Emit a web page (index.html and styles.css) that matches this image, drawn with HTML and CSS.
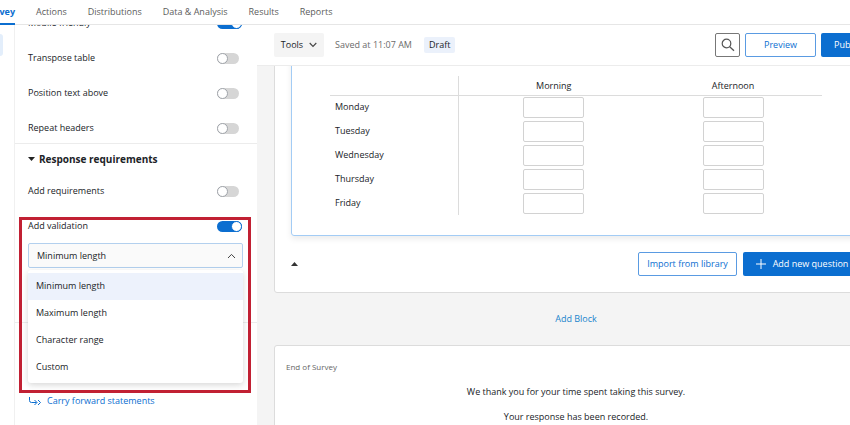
FILE: index.html
```html
<!DOCTYPE html>
<html lang="en">
<head>
    <meta charset="UTF-8">
    <title>Survey builder</title>
    <link rel="stylesheet" href="styles.css">
</head>
<body>
    <nav class="tabs">
        <a href="#" class="tab active">Survey</a>
        <a href="#" class="tab">Actions</a>
        <a href="#" class="tab">Distributions</a>
        <a href="#" class="tab">Data &amp; Analysis</a>
        <a href="#" class="tab">Results</a>
        <a href="#" class="tab">Reports</a>
    </nav>

    <div class="page">
        <div class="rail"><div class="rail-item"></div></div>

        <aside class="side">
            <section class="group group-first">
                <div class="row">
                    <label for="mobile">Mobile friendly</label>
                    <input type="checkbox" class="toggle" id="mobile" checked>
                </div>
                <div class="row">
                    <label for="transpose">Transpose table</label>
                    <input type="checkbox" class="toggle" id="transpose">
                </div>
                <div class="row">
                    <label for="position">Position text above</label>
                    <input type="checkbox" class="toggle" id="position">
                </div>
                <div class="row">
                    <label for="repeat">Repeat headers</label>
                    <input type="checkbox" class="toggle" id="repeat">
                </div>
            </section>

            <section class="group group-response">
                <h2>
                    <svg width="7" height="4" viewBox="0 0 7 4"><path d="M0 0h7L3.5 4z" fill="#222"/></svg>
                    Response requirements
                </h2>
                <div class="row">
                    <label for="requirements">Add requirements</label>
                    <input type="checkbox" class="toggle" id="requirements">
                </div>
                <div class="validation">
                    <div class="row">
                        <label for="validation">Add validation</label>
                        <input type="checkbox" class="toggle" id="validation" checked>
                    </div>
                    <div class="dropdown">
                        <select class="select" aria-label="Validation type">
                            <option>Minimum length</option>
                            <option>Maximum length</option>
                            <option>Character range</option>
                            <option>Custom</option>
                        </select>
                        <svg class="caret" width="9" height="6" viewBox="0 0 9 6"><path d="M1 5l3.5-3.6L8 5" fill="none" stroke="#444" stroke-width="1"/></svg>
                        <ul class="menu">
                            <li class="selected">Minimum length</li>
                            <li>Maximum length</li>
                            <li>Character range</li>
                            <li>Custom</li>
                        </ul>
                    </div>
                    <div class="highlight"></div>
                </div>
            </section>

            <section class="group group-last">
                <a href="#" class="carry">
                    <svg width="12" height="9" viewBox="0 0 12 9"><path d="M.5 0v3.500q0 2 2 2h5M5.500 3L8 5.500 5.500 8M9 3l2.500 2.500L9 8" fill="none" stroke="#0b6ed0" stroke-width="1"/></svg>
                    Carry forward statements
                </a>
            </section>
        </aside>

        <main class="workspace">
            <div class="toolbar">
                <button class="btn tools">Tools
                    <svg width="8" height="6" viewBox="0 0 8 6"><path d="M.7 1L4 4.500 7.300 1" fill="none" stroke="#444" stroke-width="1.1"/></svg>
                </button>
                <span class="saved">Saved at 11:07 AM</span>
                <span class="badge">Draft</span>
                <button class="btn search" aria-label="Search">
                    <svg width="14" height="14" viewBox="0 0 14 14"><circle cx="5.500" cy="5.500" r="4.300" fill="none" stroke="#555" stroke-width="1.200"/><path d="M8.700 8.700L13 12.700" stroke="#555" stroke-width="1.300"/></svg>
                </button>
                <button class="btn outline preview">Preview</button>
                <button class="btn primary publish">Publish</button>
            </div>

            <div class="canvas">
                <section class="block">
                    <div class="question">
                        <p class="question-text">What appointments are there on each day</p>
                        <table>
                            <thead>
                                <tr><th class="day"></th><th class="morning">Morning</th><th>Afternoon</th></tr>
                            </thead>
                            <tbody>
                                <tr><th class="day">Monday</th><td class="morning"><input type="text" aria-label="Monday morning"></td><td><input type="text" aria-label="Monday afternoon"></td></tr>
                                <tr><th class="day">Tuesday</th><td class="morning"><input type="text" aria-label="Tuesday morning"></td><td><input type="text" aria-label="Tuesday afternoon"></td></tr>
                                <tr><th class="day">Wednesday</th><td class="morning"><input type="text" aria-label="Wednesday morning"></td><td><input type="text" aria-label="Wednesday afternoon"></td></tr>
                                <tr><th class="day">Thursday</th><td class="morning"><input type="text" aria-label="Thursday morning"></td><td><input type="text" aria-label="Thursday afternoon"></td></tr>
                                <tr><th class="day">Friday</th><td class="morning"><input type="text" aria-label="Friday morning"></td><td><input type="text" aria-label="Friday afternoon"></td></tr>
                            </tbody>
                        </table>
                    </div>
                    <div class="block-footer">
                        <button class="collapse" aria-label="Collapse block">
                            <svg width="7" height="4" viewBox="0 0 7 4"><path d="M0 4h7L3.500 0z" fill="#333"/></svg>
                        </button>
                        <button class="btn outline import">Import from library</button>
                        <button class="btn primary add">
                            <svg width="10" height="10" viewBox="0 0 10 10"><path d="M5 0v10M0 5h10" stroke="#fff" stroke-width="1"/></svg>
                            Add new question
                        </button>
                    </div>
                </section>

                <div class="add-block"><a href="#">Add Block</a></div>

                <section class="end">
                    <h3>End of Survey</h3>
                    <p>We thank you for your time spent taking this survey.</p>
                    <p>Your response has been recorded.</p>
                </section>
            </div>
        </main>
    </div>
</body>
</html>
```

FILE: styles.css
```css
*, *::before {
    box-sizing: border-box;
}
html, body {
    height: 100%;
}
body {
    display: flex;
    flex-direction: column;
    margin: 0;
    overflow: hidden;
    font-family: "Open Sans", "Noto Sans", sans-serif;
    font-size: 9px;
    line-height: 14px;
    color: #202327;
    background: #fff;
}
a {
    color: #0b6ed0;
    text-decoration: none;
}
button, input, select {
    font: inherit;
    color: inherit;
    margin: 0;
}
svg {
    flex: none;
    display: block;
}

/* top navigation */
.tabs {
    display: flex;
    flex: none;
    gap: 21px;
    height: 25px;
    margin-left: -18px;
    border-bottom: 1px solid #e6e6e6;
}
.tab {
    height: 25px;
    padding-top: 5px;
    color: #5c5c5c;
}
.tab.active {
    width: 33px;
    text-align: right;
    font-weight: bold;
    color: #0b6ed0;
    border-bottom: 2px solid #0b6ed0;
}

.page {
    display: flex;
    flex: 1;
    min-height: 0;
    overflow: hidden;
}
.rail {
    flex: none;
    width: 15px;
    padding-top: 9px;
    border-right: 1px solid #f0f0f0;
}
.rail-item {
    width: 3px;
    height: 22px;
    border-radius: 0 3px 3px 0;
    background: #e3eefb;
}

/* side panel */
.side {
    flex: none;
    width: 242px;
}
.group {
    display: flex;
    flex-direction: column;
    gap: 5px;
    padding: 0 14px 0 13px;
    border-bottom: 1px solid #ececec;
}
.group-first {
    margin-top: -17px;
}
.group-response {
    padding-bottom: 54px;
}
.group-last {
    padding-top: 71px;
    border: none;
}
.group h2 {
    display: flex;
    align-items: center;
    gap: 4px;
    height: 30px;
    margin: 0 0 -3px;
    font-size: 10px;
    font-weight: bold;
}
.row {
    display: flex;
    align-items: center;
    justify-content: space-between;
    height: 30px;
}
.toggle {
    appearance: none;
    display: flex;
    width: 22px;
    height: 11px;
    margin-right: 4px;
    border-radius: 6px;
    background: #d6d6d6;
}
.toggle::before {
    content: "";
    width: 11px;
    height: 11px;
    border: 1px solid #a0a4aa;
    border-radius: 50%;
    background: #fff;
}
.toggle:checked {
    width: 25px;
    margin-right: 1px;
    justify-content: flex-end;
    background: #0b6ed0;
}
.toggle:checked::before {
    border-color: #0b6ed0;
}
.validation {
    position: relative;
}
.dropdown {
    position: relative;
    margin-top: 2px;
}
.select {
    appearance: none;
    display: block;
    width: 100%;
    height: 25px;
    padding: 0 8px;
    border: 1px solid #b3d0ee;
    border-radius: 2px;
    background: #fafafa;
}
.caret {
    position: absolute;
    top: 10px;
    right: 7px;
}
.menu {
    position: absolute;
    top: 27px;
    left: 0;
    right: 0;
    margin: 0;
    padding: 3px 0 2px;
    list-style: none;
    background: #fff;
    border-radius: 3px;
    box-shadow: 0 2px 6px rgba(0, 0, 0, 0.16);
}
.menu li {
    height: 27px;
    padding: 0 8px;
    line-height: 26px;
}
.menu .selected {
    background: #edf2fc;
}
.highlight {
    position: absolute;
    top: 6px;
    left: -9px;
    right: -8px;
    height: 176px;
    border: 3px solid #c12033;
    pointer-events: none;
}
.carry {
    display: flex;
    align-items: center;
    gap: 6px;
    padding-left: 1px;
}

/* workspace runs on past the right edge of the window */
.workspace {
    flex: 1;
    display: flex;
    flex-direction: column;
    min-width: 0;
    margin-right: -28px;
}
.toolbar {
    display: flex;
    flex: none;
    align-items: center;
    height: 41px;
    padding-left: 17px;
    border-bottom: 1px solid #ececec;
}
.btn {
    display: flex;
    align-items: center;
    justify-content: center;
    height: 24px;
    padding: 0;
    border: 1px solid transparent;
    border-radius: 2px;
    background: none;
    white-space: nowrap;
}
.tools {
    gap: 6px;
    width: 50px;
    background: #f4f4f4;
}
.saved {
    margin-left: 11px;
    color: #6b6b6b;
}
.badge {
    margin-left: 12px;
    padding: 1px 5px;
    border-radius: 2px;
    background: #ebf1fb;
}
.search {
    width: 25px;
    margin-left: auto;
    border-color: #777;
}
.outline {
    border-color: #5a9be2;
    background: #fff;
    color: #0b6ed0;
}
.primary {
    background: #0b6ed0;
    color: #fff;
}
.preview {
    width: 71px;
    margin: 0 5px;
}
.publish {
    width: 57px;
}

.canvas {
    flex: 1;
    min-height: 0;
    overflow: hidden;
    padding-left: 17px;
    background: #f4f4f4;
}
.block, .end {
    border: 1px solid #dcdcdc;
    border-radius: 3px;
    background: #fff;
}
.block {
    margin-top: -22px;
    padding: 0 16px 16px;
}
.question {
    padding: 7px 38px 20px;
    border: 1px solid #a3ccf5;
    border-radius: 3px;
    box-shadow: 0 3px 6px rgba(0, 0, 0, 0.08);
}
.question-text {
    margin: 0 0 9px;
    padding-left: 5px;
}
table {
    width: 100%;
    table-layout: fixed;
    border-collapse: collapse;
}
th, td {
    height: 24px;
    padding: 0;
    text-align: center;
    font-weight: normal;
}
thead th {
    height: 19px;
    padding-top: 2px;
    border-bottom: 1px solid #dcdcdc;
}
.day {
    width: 128px;
    padding-left: 5px;
    border-right: 1px solid #dcdcdc;
    text-align: left;
}
.morning {
    width: 186px;
    padding-left: 5px;
}
td input {
    display: block;
    width: 61px;
    height: 21px;
    margin: 0 auto;
    border: 1px solid #d2d2d2;
    border-radius: 2px;
}
.block-footer {
    display: flex;
    align-items: center;
    gap: 6px;
    padding-top: 16px;
}
.collapse {
    margin-right: auto;
    padding: 0;
    border: none;
    background: none;
}
.import {
    width: 99px;
}
.add {
    gap: 7px;
    width: 118px;
}
.add-block {
    padding: 19px 0;
    text-align: center;
}
.add-block a {
    color: #1a84cc;
}
.end {
    height: 200px;
    padding: 14px 11px;
}
.end h3 {
    margin: 0 0 11px;
    font-size: 8px;
    font-weight: normal;
    color: #666;
}
.end p {
    margin: 0 0 11px;
    text-align: center;
}
```
